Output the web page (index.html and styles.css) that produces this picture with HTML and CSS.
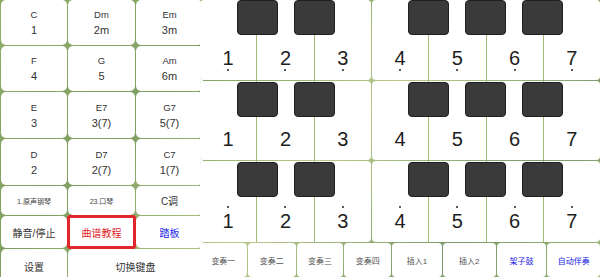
FILE: index.html
```html
<!DOCTYPE html>
<html>
<head>
<meta charset="utf-8">
<link rel="stylesheet" href="styles.css">
</head>
<body>
<div class="app">
  <div class="left">
    <div class="cell chord"><span class="nm">C</span><span class="deg">1</span></div>
    <div class="cell chord"><span class="nm">Dm</span><span class="deg">2m</span></div>
    <div class="cell chord"><span class="nm">Em</span><span class="deg">3m</span></div>
    <div class="cell chord"><span class="nm">F</span><span class="deg">4</span></div>
    <div class="cell chord"><span class="nm">G</span><span class="deg">5</span></div>
    <div class="cell chord"><span class="nm">Am</span><span class="deg">6m</span></div>
    <div class="cell chord"><span class="nm">E</span><span class="deg">3</span></div>
    <div class="cell chord"><span class="nm">E7</span><span class="deg">3(7)</span></div>
    <div class="cell chord"><span class="nm">G7</span><span class="deg">5(7)</span></div>
    <div class="cell chord"><span class="nm">D</span><span class="deg">2</span></div>
    <div class="cell chord"><span class="nm">D7</span><span class="deg">2(7)</span></div>
    <div class="cell chord"><span class="nm">C7</span><span class="deg">1(7)</span></div>
    <div class="cell tiny">1.原声钢琴</div>
    <div class="cell tiny">23.口琴</div>
    <div class="cell small">C调</div>
    <div class="cell small">静音/停止</div>
    <div class="cell small red">曲谱教程</div>
    <div class="cell small blue">踏板</div>
    <div class="cell small">设置</div>
    <div class="cell small span2">切换键盘</div>
  </div>
  <div class="right">
    <div class="prow r1">
      <div class="grp g3">
        <div class="key"><span class="n below">1</span></div>
        <div class="key"><span class="n below">2</span></div>
        <div class="key"><span class="n below">3</span></div>
      </div>
      <div class="grp g4">
        <div class="key"><span class="n below">4</span></div>
        <div class="key"><span class="n below">5</span></div>
        <div class="key"><span class="n below">6</span></div>
        <div class="key"><span class="n below">7</span></div>
      </div>
      <div class="bk b1"></div><div class="bk b2"></div><div class="bk b4"></div><div class="bk b5"></div><div class="bk b6"></div>
    </div>
    <div class="prow r2">
      <div class="grp g3">
        <div class="key"><span class="n">1</span></div>
        <div class="key"><span class="n">2</span></div>
        <div class="key"><span class="n">3</span></div>
      </div>
      <div class="grp g4">
        <div class="key"><span class="n">4</span></div>
        <div class="key"><span class="n">5</span></div>
        <div class="key"><span class="n">6</span></div>
        <div class="key"><span class="n">7</span></div>
      </div>
      <div class="bk b1"></div><div class="bk b2"></div><div class="bk b4"></div><div class="bk b5"></div><div class="bk b6"></div>
    </div>
    <div class="prow r3">
      <div class="grp g3">
        <div class="key"><span class="n above">1</span></div>
        <div class="key"><span class="n above">2</span></div>
        <div class="key"><span class="n above">3</span></div>
      </div>
      <div class="grp g4">
        <div class="key"><span class="n above">4</span></div>
        <div class="key"><span class="n above">5</span></div>
        <div class="key"><span class="n above">6</span></div>
        <div class="key"><span class="n above">7</span></div>
      </div>
      <div class="bk b1"></div><div class="bk b2"></div><div class="bk b4"></div><div class="bk b5"></div><div class="bk b6"></div>
    </div>
    <div class="btns">
      <div class="btn w48">变奏一</div>
      <div class="btn w49">变奏二</div>
      <div class="btn w47">变奏三</div>
      <div class="btn w48">变奏四</div>
      <div class="btn w51">插入1</div>
      <div class="btn w53">插入2</div>
      <div class="btn w51 blue">架子鼓</div>
      <div class="btn w53 blue">自动伴奏</div>
    </div>
  </div>
</div>
</body>
</html>
```
FILE: styles.css
```css
* { box-sizing: border-box; }
html, body { margin: 0; padding: 0; }
body {
  width: 600px;
  height: 277px;
  overflow: hidden;
  font-family: "Liberation Sans", "Noto Sans CJK SC", sans-serif;
  background: linear-gradient(135deg, #8fae6a 0%, #7f9f62 30%, #b6c98a 55%, #7c9a6e 80%, #9ab57a 100%);
}
.app {
  display: flex;
  width: 600px;
  height: 277px;
}
.left {
  width: 200px;
  flex: none;
  display: grid;
  grid-template-columns: 66px 67px 67px;
  grid-template-rows: 45px 45px 46px 46px 29px 32px 34px;
  gap: 1px;
  padding: 0 1px 0 1px;
}
.cell {
  background: #fff;
  border-radius: 5px;
  display: flex;
  align-items: center;
  justify-content: center;
  color: #333;
}
.chord {
  flex-direction: column;
  gap: 4px;
  font-size: 10px;
}
.chord .nm { font-size: 9.5px; line-height: 11px; }
.chord .deg { font-size: 11px; line-height: 12px; }
.tiny { font-size: 7px; color: #444; }
.small { font-size: 10px; color: #333; }
.red {
  color: #e0242a;
  outline: 3px solid #e3262c;
  outline-offset: -2px;
  border-radius: 2px;
}
.blue { color: #1a1ae6; }
.span2 { grid-column: span 2; }

.right {
  width: 400px;
  flex: none;
  display: flex;
  flex-direction: column;
  gap: 1px;
}
.prow {
  position: relative;
  display: flex;
  gap: 1px;
}
.r1 { height: 80px; }
.r2 { height: 79px; }
.r3 { height: 81px; }
.grp {
  display: flex;
  gap: 1px;
  background: #a3bb78;
  border-radius: 4px;
  overflow: hidden;
}
.g3 { width: 171px; }
.g4 { width: 228px; }
.key {
  flex: 1;
  background: #fff;
  display: flex;
  justify-content: center;
  padding-top: 48px;
}
.r3 .key { padding-top: 50px; }
.n {
  position: relative;
  font-family: "Liberation Sans", sans-serif;
  font-size: 20px;
  line-height: 20px;
  color: #1e1e1e;
}
.below::after, .above::before {
  content: "";
  position: absolute;
  left: 50%;
  width: 2px;
  height: 2px;
  margin-left: -1px;
  background: #222;
  border-radius: 1px;
}
.below::after { top: 21px; }
.above::before { top: -5px; }
.bk {
  position: absolute;
  top: 0;
  width: 41px;
  height: 35px;
  background: #3a3a3a;
  border: 1px solid #1f1f1f;
  border-radius: 4px;
}
.r2 .bk, .r3 .bk { top: 1px; }
.b1 { left: 37px; }
.b2 { left: 94px; }
.b4 { left: 208px; }
.b5 { left: 265px; }
.b6 { left: 322px; }

.btns {
  flex: 1;
  display: flex;
  gap: 1px;
}
.btn {
  background: #fff;
  border-radius: 4px;
  display: flex;
  align-items: center;
  justify-content: center;
  font-size: 8px;
  color: #555;
}
.btn.blue { color: #1a1ae6; }
.w47 { width: 47px; }
.w48 { width: 47px; }
.w49 { width: 48px; }
.w51 { width: 50px; }
.w53 { width: 53px; }
```
